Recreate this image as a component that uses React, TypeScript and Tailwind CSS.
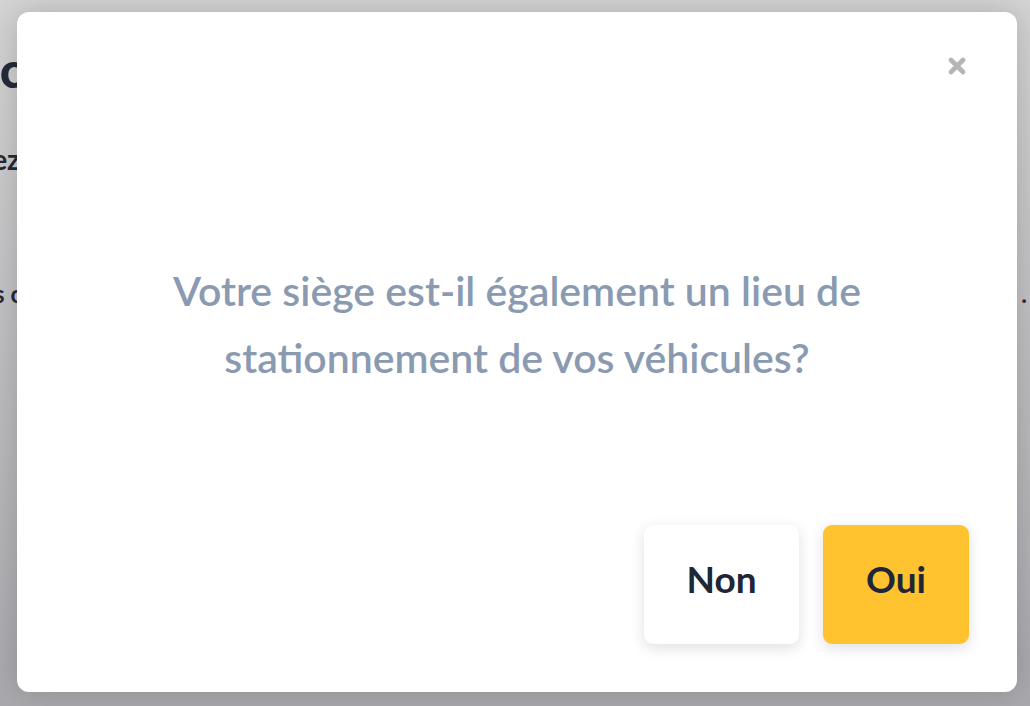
export default function App() {
  return (
    <div
      className="relative h-[706px] w-full overflow-hidden bg-white text-[#1e2638]"
      style={{ fontFamily: 'Lato, "Noto Sans", sans-serif' }}
    >
      {/* page behind the dialog */}
      <div className="flex flex-col whitespace-nowrap pt-[40px]">
        <h1 className="flex text-[50px] font-black leading-[58px]">
          <span className="flex w-[24px] shrink-0 justify-end">
            <span>Votre loc</span>
          </span>
          <span>alisation</span>
        </h1>
        <p className="mt-[40px] flex text-[28px] font-bold">
          <span className="flex w-[20px] shrink-0 justify-end">
            <span>Précisez</span>
          </span>
          <span>&nbsp;votre adresse</span>
        </p>
        <div className="mt-[96px] flex justify-between text-[24px] font-bold">
          <p className="flex">
            <span className="flex w-[22px] shrink-0 justify-end">
              <span>Vos adresses c</span>
            </span>
            <span>onnues</span>
          </p>
          <p className="mr-[3px]">.</p>
        </div>
      </div>

      {/* overlay */}
      <div className="absolute inset-0 bg-gradient-to-b from-[rgba(60,60,60,0.22)] to-[rgba(40,38,50,0.4)]" />

      {/* dialog */}
      <div className="absolute left-[17px] top-[12px] flex h-[680px] w-[1000px] flex-col rounded-[12px] bg-white px-12 pb-12 pt-[45px] shadow-[0_0_30px_rgba(0,0,0,0.18)]">
        <div className="flex justify-end">
          <button className="mr-[3px] text-[#b5b5b5]">
            <svg width="18" height="18" viewBox="0 0 18 18" fill="none">
              <path d="M3 3 15 15M15 3 3 15" stroke="currentColor" strokeWidth="4.6" strokeLinecap="round" />
            </svg>
          </button>
        </div>

        <p className="mt-[182px] text-center text-[41px] font-semibold leading-[67px] text-[#8a9ab0]">
          Votre siège est-il également un lieu de
          <br />
          stationnement de vos véhicules?
        </p>

        <div className="flex-1" />

        <div className="flex justify-end gap-6">
          <button className="flex h-[119px] w-[155px] items-center justify-center rounded-[9px] bg-white pb-[11px] text-[37px] font-bold shadow-[0_4px_14px_rgba(30,38,56,0.14)]">
            Non
          </button>
          <button className="flex h-[119px] w-[146px] items-center justify-center rounded-[9px] bg-[#ffc32f] pb-[11px] text-[37px] font-bold shadow-[0_4px_14px_rgba(30,38,56,0.14)]">
            Oui
          </button>
        </div>
      </div>
    </div>
  );
}
